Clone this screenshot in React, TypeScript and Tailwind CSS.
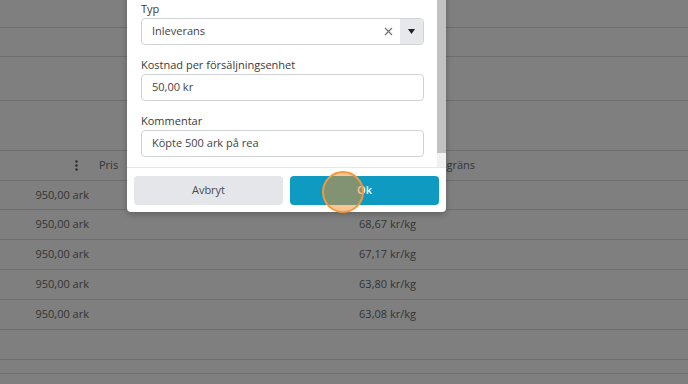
import React from "react";

const rows = [
  { a: "950,00 ark", b: "69,98 kr/kg" },
  { a: "950,00 ark", b: "68,67 kr/kg" },
  { a: "950,00 ark", b: "67,17 kr/kg" },
  { a: "950,00 ark", b: "63,80 kr/kg" },
  { a: "950,00 ark", b: "63,08 kr/kg" },
];

function Field({ label, children }: { label: string; children: React.ReactNode }) {
  return (
    <div className="flex flex-col">
      <div className="text-[11px] leading-[16px] text-[#3a3a3a]">{label}</div>
      <div className="mt-[1px]">{children}</div>
    </div>
  );
}

export default function App() {
  return (
    <div className="relative w-[688px] h-[384px] overflow-hidden bg-white font-['Open_Sans',sans-serif]">
      {/* underlying page */}
      <div className="flex flex-col text-[11px] text-[#6a6a6a]">
        <div className="h-[28px] border-b border-[#dcdcdc]" />
        <div className="h-[29px] border-b border-[#dcdcdc]" />
        <div className="h-[44px] border-b border-[#dcdcdc]" />
        <div className="h-[50px] border-b border-[#dcdcdc]" />
        <div className="h-[30px] border-b border-[#dcdcdc] flex items-center">
          <div className="w-[97px] flex justify-end pr-[19px]">
            <svg width="3" height="11" viewBox="0 0 3 11">
              <circle cx="1.5" cy="1.5" r="1.2" fill="#555" />
              <circle cx="1.5" cy="5.5" r="1.2" fill="#555" />
              <circle cx="1.5" cy="9.5" r="1.2" fill="#555" />
            </svg>
          </div>
          <div className="w-[378px] flex justify-between pl-[2px] whitespace-nowrap">
            <span>Pris</span>
            <span>Beställningsgräns</span>
          </div>
        </div>
        {rows.map((r, i) => (
          <div
            key={i}
            className={`${i === 0 ? "h-[29px]" : "h-[30px]"} border-b border-[#dcdcdc] flex items-center whitespace-nowrap`}
          >
            <div className="w-[89px] text-right">{r.a}</div>
            <div className="w-[327px] text-right">{r.b}</div>
          </div>
        ))}
        <div className="h-[30px] border-b border-[#dcdcdc]" />
        <div className="h-[14px] border-b border-[#dcdcdc]" />
      </div>

      {/* overlay */}
      <div className="absolute inset-0 bg-black/50" />

      {/* modal */}
      <div className="absolute left-[127px] top-[-16px] w-[319px] bg-white rounded-b-[4px] shadow-[0_2px_6px_rgba(0,0,0,0.25)] flex flex-col">
        <div className="flex">
          <div className="flex-1 pl-[14px] pr-[13px] pt-[17px] pb-[10px] flex flex-col gap-[12px]">
            <Field label="Typ">
              <div className="h-[27px] rounded-[4px] border border-[#cfd3d8] flex items-center overflow-hidden">
                <div className="flex-1 pl-[10px] text-[11px] text-[#444]">Inleverans</div>
                <div className="w-[24px] flex items-center justify-center">
                  <svg width="9" height="9" viewBox="0 0 9 9">
                    <path d="M1 1 L8 8 M8 1 L1 8" stroke="#777" strokeWidth="1.3" />
                  </svg>
                </div>
                <div className="w-[23px] h-full bg-[#e6e8eb] flex items-center justify-center">
                  <svg width="7" height="5" viewBox="0 0 7 5">
                    <path d="M0 0 L7 0 L3.5 5 Z" fill="#222" />
                  </svg>
                </div>
              </div>
            </Field>
            <Field label="Kostnad per försäljningsenhet">
              <div className="h-[27px] rounded-[4px] border border-[#cfd3d8] flex items-center pl-[10px] text-[11px] text-[#444]">
                50,00 kr
              </div>
            </Field>
            <Field label="Kommentar">
              <div className="h-[27px] rounded-[4px] border border-[#cfd3d8] flex items-center pl-[10px] text-[11px] text-[#444]">
                Köpte 500 ark på rea
              </div>
            </Field>
          </div>
          <div className="w-[9px] flex flex-col bg-[#f1f1f1]">
            <div className="h-[169px] bg-[#c1c1c1]" />
          </div>
        </div>
        <div className="border-t border-[#e6e6e6] pt-[8px] pb-[7px] px-[7px] flex gap-[7px]">
          <button className="flex-1 h-[29px] rounded-[4px] bg-[#e4e6ea] text-[11px] text-[#4a4a4a]">
            Avbryt
          </button>
          <button className="flex-1 h-[29px] rounded-[4px] bg-[#0e9ac1] text-[11px] font-semibold text-white">
            Ok
          </button>
        </div>
      </div>

      {/* click indicator */}
      <div className="absolute left-[322px] top-[171px] w-[42px] h-[42px] rounded-full border-2 border-[#f39a3c] bg-[#f58c28]/50" />
    </div>
  );
}
